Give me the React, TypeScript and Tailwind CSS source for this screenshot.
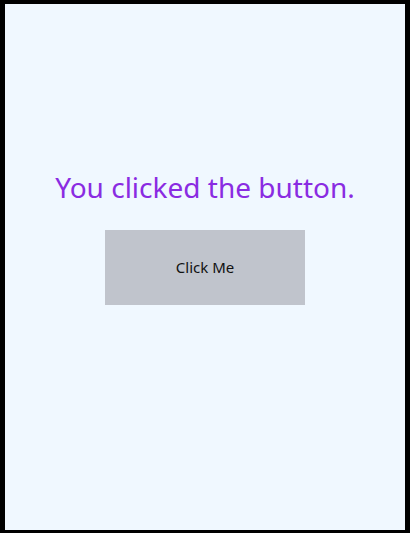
import React, { useState } from 'react';

export default function App() {
    const [clicked, setClicked] = useState(true);

    return (
        <div className="h-[533px] w-[410px] bg-black pl-[5px] pr-[5px] pt-[4px] pb-[3px]">
            <div className="flex h-full flex-col items-center bg-[#f0f8ff] pt-[164px] font-['Noto_Sans',sans-serif]">
                <h1 className="h-[38px] text-[28px] leading-[38px] text-[#8a2be2]">
                    {clicked ? 'You clicked the button.' : 'Hello!'}
                </h1>
                <button
                    onClick={() => setClicked(true)}
                    className="mt-[24px] h-[75px] w-[200px] bg-[#c0c4cc] text-[15px] text-[#111]"
                >
                    Click Me
                </button>
            </div>
        </div>
    );
}
